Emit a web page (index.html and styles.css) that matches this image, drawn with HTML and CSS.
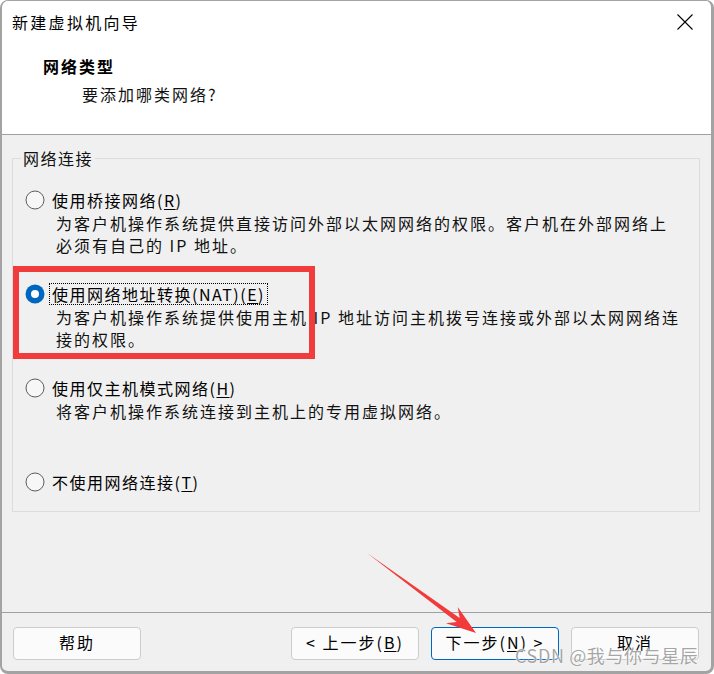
FILE: index.html
```html
<!DOCTYPE html>
<html lang="zh-CN">
<head>
<meta charset="utf-8">
<title>新建虚拟机向导</title>
<link rel="stylesheet" href="styles.css">
</head>
<body>
<div class="window">
  <header class="top">
    <div class="titlebar">
      <span class="title">新建虚拟机向导</span>
      <svg class="close" width="16" height="16" viewBox="0 0 16 16"><path d="M0.5 0.5 L15.5 15.5 M15.5 0.5 L0.5 15.5" stroke="#000" stroke-width="1.1" fill="none"/></svg>
    </div>
    <div class="heading">
      <div class="h-title">网络类型</div>
      <div class="h-sub">要添加哪类网络?</div>
    </div>
  </header>
  <main class="content">
    <fieldset class="group">
      <legend>网络连接</legend>
      <div class="options">
        <div class="opt">
          <div class="opt-row">
            <svg class="radio" width="20" height="20" viewBox="0 0 20 20"><circle cx="10" cy="10" r="9" fill="#f7f7f7" stroke="#5c5c5c" stroke-width="1"/></svg>
            <span class="label">使用桥接网络(<u>R</u>)</span>
          </div>
          <div class="desc">为客户机操作系统提供直接访问外部以太网网络的权限。客户机在外部网络上<br>必须有自己的 IP 地址。</div>
        </div>
        <div class="opt">
          <div class="opt-row">
            <svg class="radio" width="20" height="20" viewBox="0 0 20 20"><circle cx="10" cy="10" r="9.5" fill="#0067c0"/><circle cx="10" cy="10" r="4" fill="#fff"/></svg>
            <span class="label focus">使用网络地址转换(NAT)(<u>E</u>)</span>
          </div>
          <div class="desc">为客户机操作系统提供使用主机 IP 地址访问主机拨号连接或外部以太网网络连<br>接的权限。</div>
        </div>
        <div class="opt">
          <div class="opt-row">
            <svg class="radio" width="20" height="20" viewBox="0 0 20 20"><circle cx="10" cy="10" r="9" fill="#f7f7f7" stroke="#5c5c5c" stroke-width="1"/></svg>
            <span class="label">使用仅主机模式网络(<u>H</u>)</span>
          </div>
          <div class="desc">将客户机操作系统连接到主机上的专用虚拟网络。</div>
        </div>
        <div class="opt">
          <div class="opt-row">
            <svg class="radio" width="20" height="20" viewBox="0 0 20 20"><circle cx="10" cy="10" r="9" fill="#f7f7f7" stroke="#5c5c5c" stroke-width="1"/></svg>
            <span class="label">不使用网络连接(<u>T</u>)</span>
          </div>
        </div>
      </div>
    </fieldset>
  </main>
  <footer class="buttons">
    <button class="btn help">帮助</button>
    <button class="btn">&lt; 上一步(<u>B</u>)</button>
    <button class="btn primary">下一步(<u>N</u>) &gt;</button>
    <button class="btn">取消</button>
  </footer>
</div>
<div class="highlight"></div>
<svg class="arrow" width="714" height="674" viewBox="0 0 714 674"><polygon points="367,553 459.7,618 457.7,607.1 476,633 445.9,623.3 456.7,622" fill="#f23a3a"/></svg>
<div class="watermark">CSDN @我与你与星辰</div>
</body>
</html>
```
FILE: styles.css
```css
html, body {
  margin: 0;
  padding: 0;
  background: #ffffff;
}
body {
  font-family: "Noto Sans CJK SC", "Noto Sans", sans-serif;
  font-size: 16px;
  color: #000;
  width: 714px;
  height: 674px;
  overflow: hidden;
}
.window {
  width: 714px;
  height: 674px;
  box-sizing: border-box;
  border-style: solid;
  border-color: #a3a3a3;
  border-width: 1px 3px 3px 2px;
  border-radius: 8px;
  background: #f0f0f0;
  display: flex;
  flex-direction: column;
  overflow: hidden;
}
.top {
  background: #ffffff;
  height: 134px;
  box-sizing: border-box;
  border-bottom: 1px solid #a0a0a0;
  flex: none;
}
.titlebar {
  height: 42px;
  display: flex;
  align-items: center;
  justify-content: space-between;
  padding: 0 18px 0 10px;
}
.title {
  letter-spacing: 2.3px;
  line-height: 22px;
}
.close {
  display: block;
}
.heading {
  padding: 12px 0 0 41px;
  letter-spacing: 2px;
}
.h-title {
  font-weight: 700;
  line-height: 22px;
}
.h-sub {
  margin-top: 6px;
  padding-left: 39px;
  line-height: 22px;
  color: #111;
}
.content {
  flex: 1;
  padding: 12px 11px 0 10px;
}
.group {
  margin: 0;
  border: 1px solid #dcdcdc;
  padding: 0 12px 18px 12px;
}
.group legend {
  margin-left: -4px;
  padding: 0 2px;
  line-height: 22px;
  letter-spacing: 1.5px;
  color: #111;
}
.options {
  padding-top: 20px;
}
.opt {
  height: 94px;
}
.opt:last-child {
  height: auto;
}
.opt-row {
  display: flex;
  align-items: center;
  height: 22px;
}
.radio {
  display: block;
  flex: none;
  margin-right: 4px;
}
.label {
  border: 1px dotted transparent;
  padding: 0 2px;
  line-height: 20px;
  letter-spacing: 1.5px;
  white-space: nowrap;
}
.label.focus {
  border-color: #000;
}
.label u, .btn u {
  text-underline-offset: 2px;
}
.desc {
  margin: 1px 0 0 31px;
  line-height: 22px;
  letter-spacing: 2px;
  white-space: nowrap;
  color: #111;
}
.buttons {
  flex: none;
  height: 59px;
  box-sizing: border-box;
  border-top: 1px solid #a0a0a0;
  display: flex;
  align-items: flex-start;
  gap: 12px;
  padding: 14px 12px 0 11px;
}
.btn {
  width: 128px;
  height: 33px;
  box-sizing: border-box;
  border: 1px solid #cccccc;
  border-radius: 4px;
  background: #fbfbfb;
  font-family: inherit;
  font-size: 16px;
  line-height: 20px;
  color: #000;
  letter-spacing: 2px;
  padding: 0 0 3px 0;
}
.btn.help {
  margin-right: auto;
}
.btn.primary {
  border-color: #0067c0;
}
.highlight {
  position: absolute;
  left: 13px;
  top: 266px;
  width: 302px;
  height: 93px;
  box-sizing: border-box;
  border: 6px solid #f03c3c;
  pointer-events: none;
}
.arrow {
  position: absolute;
  left: 0;
  top: 0;
  pointer-events: none;
}
.watermark {
  position: absolute;
  left: 515px;
  top: 643px;
  font-size: 18px;
  line-height: 24px;
  letter-spacing: 0.6px;
  color: rgba(150, 150, 150, 0.85);
  text-shadow: 0 0 2px #ffffff, 0 0 1px #ffffff;
  white-space: nowrap;
  pointer-events: none;
}
```
